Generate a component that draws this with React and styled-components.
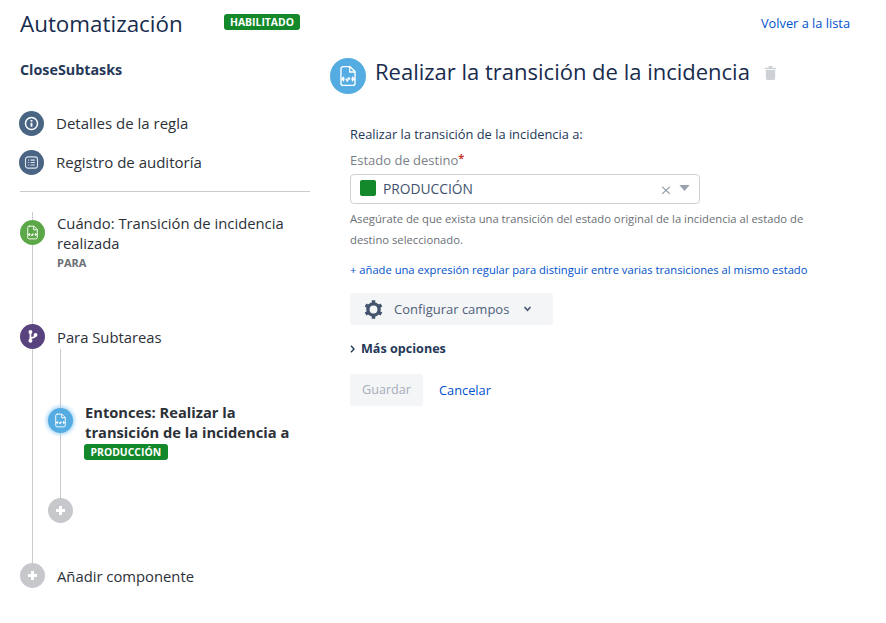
import React from 'react';
import styled, { createGlobalStyle } from 'styled-components';

const GlobalStyle = createGlobalStyle`
    html, body {
        margin: 0;
        padding: 0;
        background: #FFFFFF;
        font-family: "Open Sans", "Noto Sans", "Liberation Sans", sans-serif;
        color: #2C3138;
    }
`

const Page = styled.div`
    display: grid;
    grid-template-columns: 290px 1fr;
    column-gap: 20px;
    width: 886px;
    height: 623px;
    padding: 0 36px 0 20px;
    box-sizing: border-box;
    overflow: hidden;
`

const Sidebar = styled.aside`
    display: flex;
    flex-direction: column;
`

const TopRow = styled.div`
    display: flex;
    align-items: flex-start;
    padding-top: 8px;
    height: 40px;
`

const PageTitle = styled.h1`
    margin: 0;
    width: 204px;
    font-size: 22.4px;
    line-height: 32px;
    font-weight: 400;
    color: #172B4D;
`

const Lozenge = styled.span`
    display: inline-block;
    background: #14892C;
    color: #FFFFFF;
    border-radius: 3px;
    font-size: 10.4px;
    font-weight: 700;
    line-height: 16px;
    padding: 0 6.5px;
`

const StatusLozenge = styled(Lozenge)`
    margin-top: 6px;
    padding: 0 6px;
`

const RuleName = styled.h2`
    margin: 12px 0 0;
    font-size: 14.3px;
    line-height: 20px;
    font-weight: 700;
    color: #253858;
`

const NavList = styled.div`
    display: flex;
    flex-direction: column;
    gap: 14px;
    margin-top: 31px;
    padding-bottom: 16px;
    border-bottom: 1px solid #C9CBCE;
`

const NavItem = styled.div`
    display: flex;
    align-items: center;
    gap: 12px;
    height: 25px;
    margin-left: -1px;
    font-size: 15px;
`

const NavLabel = styled.span`
    margin-top: -2px;
`

const Circle = styled.span`
    display: flex;
    flex: none;
    align-items: center;
    justify-content: center;
    width: ${p => p.$size || 25}px;
    height: ${p => p.$size || 25}px;
    border-radius: 50%;
    background: ${p => p.$bg};
    box-shadow: ${p => (p.$glow ? '0 0 4px 1px #8FCBF0' : 'none')};
    color: #FFFFFF;
`

const Timeline = styled.div`
    position: relative;
    margin-top: 20px;

    &::before {
        content: '';
        position: absolute;
        left: 12px;
        top: 0;
        height: 353px;
        width: 1px;
        background: #C9CBCE;
    }
`

const Step = styled.div`
    position: relative;
    display: flex;
    align-items: ${p => (p.$top ? 'flex-start' : 'center')};
    gap: 12px;
    min-height: 25px;
    font-size: 14.8px;
    line-height: 20px;
    margin-top: ${p => p.$mt || 0}px;
`

const StepCircle = styled(Circle)`
    margin-top: ${p => p.$mt || 0}px;
`

const StepText = styled.div`
    margin-top: ${p => p.$mt || 0}px;
    font-weight: ${p => (p.$bold ? 700 : 400)};
    font-size: ${p => (p.$bold ? 14.7 : 14.8)}px;
    color: #2C3138;
`

const StepMeta = styled.div`
    margin-top: 1px;
    font-size: 11px;
    line-height: 18px;
    font-weight: 700;
    color: #6B6F76;
`

const Nested = styled.div`
    position: relative;
    margin-left: 28px;

    &::before {
        content: '';
        position: absolute;
        left: 12px;
        top: 0;
        height: 150px;
        width: 1px;
        background: #C9CBCE;
    }
`

const ValueLozenge = styled(Lozenge)`
    display: block;
    width: fit-content;
    margin: 2px 0 0 -1px;
`

const Main = styled.main`
    display: flex;
    flex-direction: column;
`

const BackLink = styled.a`
    align-self: flex-end;
    margin-top: 14px;
    font-size: 12.8px;
    line-height: 19px;
    color: #0052CC;
`

const HeaderRow = styled.div`
    display: flex;
    align-items: flex-start;
    gap: 9px;
    margin-top: 25px;
    height: 70px;
`

const ActionTitle = styled.h2`
    margin: -3px 0 0;
    font-size: 22px;
    line-height: 32px;
    font-weight: 400;
    color: #172B4D;
`

const TrashIcon = styled.svg`
    margin: 7px 0 0 5px;
    color: #CDD1D6;
`

const Form = styled.div`
    display: flex;
    flex-direction: column;
    padding-left: 20px;
`

const Lead = styled.div`
    font-size: 12.85px;
    line-height: 18px;
    margin-top: -3px;
    color: #253858;
`

const FieldLabel = styled.label`
    margin-top: 8px;
    font-size: 13px;
    line-height: 18px;
    color: #7A7F87;

    & > b {
        color: #C9372C;
        font-size: 11px;
        font-weight: 700;
        position: relative;
        top: -3px;
    }
`

const Select = styled.div`
    display: flex;
    align-items: center;
    width: 350px;
    height: 30px;
    margin-top: 4px;
    padding: 0 9px 2px;
    box-sizing: border-box;
    border: 1px solid #CDD0D5;
    border-radius: 4px;
    font-size: 13.8px;
    color: #42526E;
`

const Swatch = styled.span`
    width: 16px;
    height: 16px;
    margin-right: 7px;
    border-radius: 2px;
    background: #14892C;
`

const SelectValue = styled.span`
    flex: 1;
`

const ClearIcon = styled.svg`
    margin: 3px 8px 0 0;
`

const Help = styled.p`
    margin: 4px 0 0;
    width: 470px;
    font-size: 11.25px;
    line-height: 21px;
    color: #6B6F76;
`

const RegexLink = styled.a`
    margin-top: 10px;
    font-size: 11.2px;
    line-height: 20px;
    color: #0052CC;
`

const ConfigButton = styled.div`
    display: flex;
    align-items: center;
    width: 203px;
    height: 32px;
    margin-top: 13px;
    padding-left: 13px;
    box-sizing: border-box;
    border-radius: 3px;
    background: #F4F5F7;
    font-size: 13px;
    color: #505F79;
`

const ConfigLabel = styled.span`
    margin: 0 14px 0 10px;
`

const MoreRow = styled.div`
    display: flex;
    align-items: center;
    gap: 6px;
    margin-top: 14px;
    font-size: 12.6px;
    line-height: 20px;
    font-weight: 700;
    color: #253858;
`

const Actions = styled.div`
    display: flex;
    align-items: center;
    gap: 16px;
    margin-top: 15px;
`

const SaveButton = styled.div`
    width: 73px;
    height: 32px;
    border-radius: 3px;
    background: #F4F5F7;
    font-size: 12.6px;
    line-height: 32px;
    text-align: center;
    color: #A5ADBA;
`

const CancelLink = styled.a`
    font-size: 12.8px;
    color: #0052CC;
`

const FileWaveIcon = ({ size = 15 }) => (
    <svg width={size} height={size} viewBox="0 0 16 16" fill="none" stroke="currentColor" strokeWidth="1" strokeLinejoin="round" strokeLinecap="round">
        <path d="M4.5 1.2h5l3.6 3.6v8.4a1.6 1.6 0 0 1-1.6 1.6h-7a1.6 1.6 0 0 1-1.6-1.6V2.8a1.6 1.6 0 0 1 1.6-1.6z" />
        <path d="M9.2 1.4v3.7h3.7" />
        <path d="M3.4 10.2h1.8M4.8 8.9L3.6 10.2l1.2 1.3M11.2 8.9l1.2 1.3-1.2 1.3M10.8 10.2h1.8M6.6 10.2l.9 1.6.9-2.6.9 1" />
    </svg>
)

const PlusIcon = () => (
    <svg width="11" height="11" viewBox="0 0 11 11" fill="none" stroke="currentColor" strokeWidth="3">
        <path d="M5.5 1v9M1 5.5h9" />
    </svg>
)

const Gear = () => (
    <svg width="21" height="21" viewBox="0 0 24 24" fill="none" stroke="#44546F" strokeWidth="3.8" strokeLinejoin="round">
        <circle cx="12" cy="12" r="6.4" />
        <path d="M12 1.5v4M12 18.5v4M2.9 6.8l3.5 2M17.6 15.2l3.5 2M2.9 17.2l3.5-2M17.6 8.8l3.5-2" strokeWidth="4" />
    </svg>
)

export default function App() {
    return (
        <Page>
            <GlobalStyle />
            <Sidebar>
                <TopRow>
                    <PageTitle>Automatización</PageTitle>
                    <StatusLozenge>HABILITADO</StatusLozenge>
                </TopRow>
                <RuleName>CloseSubtasks</RuleName>
                <NavList>
                    <NavItem>
                        <Circle $bg="#4A6583">
                            <svg width="15" height="15" viewBox="0 0 16 16" fill="none" stroke="currentColor" strokeWidth="1.6">
                                <circle cx="8" cy="8" r="6.4" />
                                <path d="M8 7.2v4.2" strokeWidth="2" />
                                <path d="M8 4.2v1.8" strokeWidth="2" />
                            </svg>
                        </Circle>
                        <NavLabel>Detalles de la regla</NavLabel>
                    </NavItem>
                    <NavItem>
                        <Circle $bg="#4A6583">
                            <svg width="15" height="15" viewBox="0 0 16 16" fill="none" stroke="#DCE6F0" strokeWidth="1.2">
                                <rect x="1.6" y="2" width="12.8" height="12" rx="2.6" />
                                <path d="M4.5 5.4h1M7 5.4h4.6M4.5 8h1M7 8h4.6M4.5 10.6h1M7 10.6h4.6" />
                            </svg>
                        </Circle>
                        <NavLabel>Registro de auditoría</NavLabel>
                    </NavItem>
                </NavList>
                <Timeline>
                    <Step $top $mt={8}>
                        <StepCircle $bg="#5CA747"><FileWaveIcon /></StepCircle>
                        <StepText $mt={-7}>
                            Cuándo: Transición de incidencia realizada
                            <StepMeta>PARA</StepMeta>
                        </StepText>
                    </Step>
                    <Step $mt={52}>
                        <Circle $bg="#59437F">
                            <svg width="15" height="15" viewBox="0 0 16 16" fill="currentColor" stroke="currentColor" strokeWidth="1.8" strokeLinecap="round">
                                <path d="M5.8 3.2v9.4" fill="none" />
                                <path d="M5.8 9.4c3.6 0 5.4-.8 5.4-3" fill="none" />
                                <circle cx="5.8" cy="3.2" r="1.2" />
                                <circle cx="5.8" cy="12.6" r="1.2" />
                                <circle cx="11.2" cy="6.4" r="1.2" />
                            </svg>
                        </Circle>
                        Para Subtareas
                    </Step>
                    <Nested>
                        <Step $top>
                            <StepCircle $bg="#55ACE2" $glow $mt={59}><FileWaveIcon /></StepCircle>
                            <StepText $bold $mt={53}>
                                Entonces: Realizar la transición de la incidencia a
                                <ValueLozenge>PRODUCCIÓN</ValueLozenge>
                            </StepText>
                        </Step>
                        <Step $mt={38}>
                            <Circle $bg="#C6C8CB"><PlusIcon /></Circle>
                        </Step>
                    </Nested>
                    <Step $mt={40}>
                        <Circle $bg="#C6C8CB"><PlusIcon /></Circle>
                        Añadir componente
                    </Step>
                </Timeline>
            </Sidebar>
            <Main>
                <BackLink>Volver a la lista</BackLink>
                <HeaderRow>
                    <Circle $bg="#55ACE2" $size={36}><FileWaveIcon size={22} /></Circle>
                    <ActionTitle>Realizar la transición de la incidencia</ActionTitle>
                    <TrashIcon width="13" height="15" viewBox="0 0 14 16" fill="currentColor">
                        <path d="M1 3h12v1.6H1zM5 1h4v2H5zM2 5.4h10v8.8A1.6 1.6 0 0 1 10.4 16H3.6A1.6 1.6 0 0 1 2 14.2z" />
                    </TrashIcon>
                </HeaderRow>
                <Form>
                    <Lead>Realizar la transición de la incidencia a:</Lead>
                    <FieldLabel>Estado de destino<b>*</b></FieldLabel>
                    <Select>
                        <Swatch />
                        <SelectValue>PRODUCCIÓN</SelectValue>
                        <ClearIcon width="10" height="10" viewBox="0 0 10 10" stroke="#8A94A3" strokeWidth="1.1" fill="none">
                            <path d="M1.2 1.8l7.6 7M8.8 1.8l-7.6 7" />
                        </ClearIcon>
                        <svg width="11" height="6" viewBox="0 0 12 7" fill="#9AA1AC">
                            <path d="M0 0h12L6 7z" />
                        </svg>
                    </Select>
                    <Help>Asegúrate de que exista una transición del estado original de la incidencia al estado de destino seleccionado.</Help>
                    <RegexLink>+ añade una expresión regular para distinguir entre varias transiciones al mismo estado</RegexLink>
                    <ConfigButton>
                        <Gear />
                        <ConfigLabel>Configurar campos</ConfigLabel>
                        <svg width="9" height="6" viewBox="0 0 10 7" fill="none" stroke="#44546F" strokeWidth="1.8">
                            <path d="M1.5 1.2L5 5l3.5-3.8" />
                        </svg>
                    </ConfigButton>
                    <MoreRow>
                        <svg width="5" height="8" viewBox="0 0 5 8" fill="none" stroke="#253858" strokeWidth="1.4">
                            <path d="M1 .8L4 4 1 7.2" />
                        </svg>
                        Más opciones
                    </MoreRow>
                    <Actions>
                        <SaveButton>Guardar</SaveButton>
                        <CancelLink>Cancelar</CancelLink>
                    </Actions>
                </Form>
            </Main>
        </Page>
    )
}
